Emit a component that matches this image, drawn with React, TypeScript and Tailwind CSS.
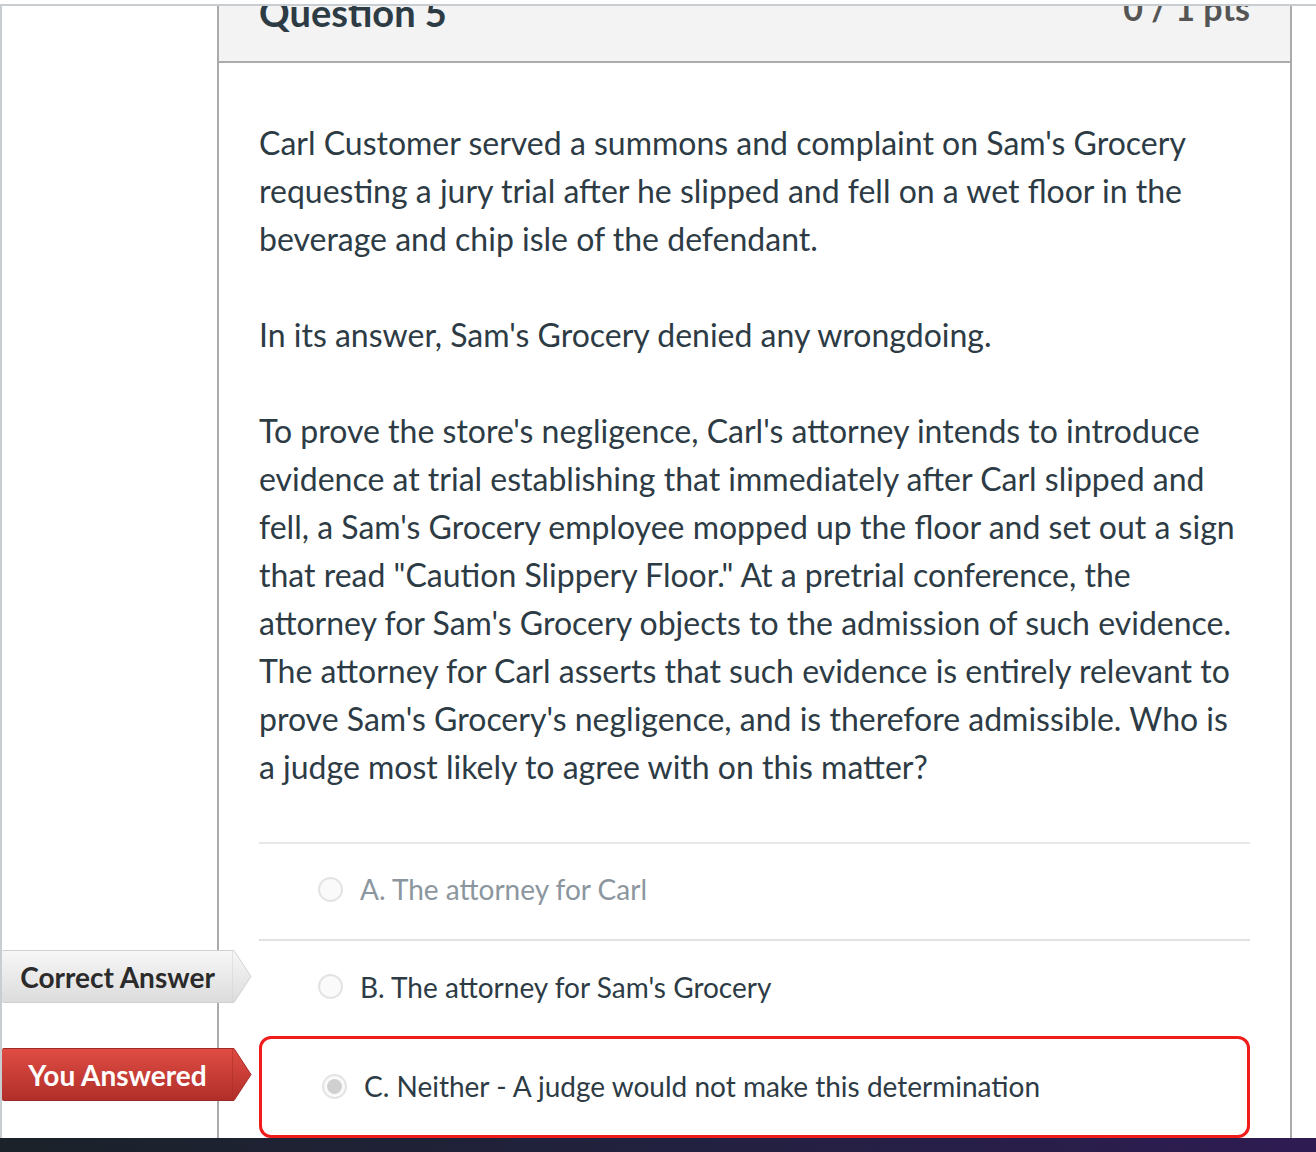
import React from 'react'

const paragraphs = [
  "Carl Customer served a summons and complaint on Sam's Grocery requesting a jury trial after he slipped and fell on a wet floor in the beverage and chip isle of the defendant.",
  "In its answer, Sam's Grocery denied any wrongdoing.",
  "To prove the store's negligence, Carl's attorney intends to introduce evidence at trial establishing that immediately after Carl slipped and fell, a Sam's Grocery employee mopped up the floor and set out a sign that read \"Caution Slippery Floor.\" At a pretrial conference, the attorney for Sam's Grocery objects to the admission of such evidence. The attorney for Carl asserts that such evidence is entirely relevant to prove Sam's Grocery's negligence, and is therefore admissible. Who is a judge most likely to agree with on this matter?",
]

function Radio({ checked = false }: { checked?: boolean }) {
  return (
    <span className="w-[25px] h-[25px] rounded-full border-2 border-[#e3e3e3] bg-[#fafafa] flex items-center justify-center flex-shrink-0">
      {checked && <span className="w-[15px] h-[15px] rounded-full bg-[#d0d0d0]" />}
    </span>
  )
}

function Tag({ label, variant, pos }: { label: string; variant: 'correct' | 'wrong'; pos: string }) {
  const body =
    variant === 'correct'
      ? 'bg-gradient-to-b from-[#f7f7f7] to-[#dcdcdc] text-[#2b2b2b] border-[#cfcfcf]'
      : 'bg-gradient-to-b from-[#df4c44] to-[#b12f29] text-white border-[#9e2a25]'
  const tip = variant === 'correct' ? '#d2d2d2' : '#a72c27'
  return (
    <div className={`absolute z-10 flex items-center h-[53px] ${pos}`}>
      <div className={`h-full w-[231px] flex items-center justify-center border-y rounded-l-[2px] text-[28px] font-bold ${body}`}>
        {label}
      </div>
      <svg width="20" height="53" viewBox="0 0 20 53" className="-ml-px">
        <defs>
          <linearGradient id={`g-${variant}`} x1="0" y1="0" x2="0" y2="1">
            <stop offset="0" stopColor={variant === 'correct' ? '#f7f7f7' : '#df4c44'} />
            <stop offset="1" stopColor={variant === 'correct' ? '#dcdcdc' : '#b12f29'} />
          </linearGradient>
        </defs>
        <path d="M0 0.5 L2 0.5 L19 26.5 L2 52.5 L0 52.5 Z" fill={`url(#g-${variant})`} stroke={tip} strokeWidth="1" />
      </svg>
    </div>
  )
}

export default function App() {
  return (
    <div
      className="w-[1316px] h-[1152px] overflow-hidden bg-white flex flex-col text-[#2d3b45]"
      style={{ fontFamily: 'Lato, "Open Sans", sans-serif' }}
    >
      <div className="h-[4px] flex-shrink-0" />
      <div className="flex-1 min-h-0 flex border-t-2 border-[#c7cdd1]">
        {/* left gutter */}
        <div className="w-[217px] flex-shrink-0 border-l-2 border-[#c7cdd1]" />

        {/* question */}
        <div className="w-[1075px] flex-shrink-0 border-x-2 border-[#ababab] flex flex-col">
          <div className="h-[57px] flex-shrink-0 bg-[#f3f3f3] border-b-2 border-[#ababab] overflow-hidden px-[40px] flex justify-between">
            <h2 className="text-[38px] font-bold leading-none mt-[-13px]">Question 5</h2>
            <span className="text-[34px] font-bold leading-none mt-[-15px] text-[#555]">0 / 1 pts</span>
          </div>

          <div className="px-[40px] pt-[56px]">
            {paragraphs.map((p, i) => (
              <p key={i} className="text-[32px] leading-[48px] mb-[48px] last:mb-0">
                {p}
              </p>
            ))}

            <div className="mt-[51px] border-t-2 border-[#e8e8e8]">
              <div className="h-[95px] pb-[5px] flex items-center gap-[17px] pl-[59px] text-[28px] text-[#8b969e]">
                <Radio />
                <span>A. The attorney for Carl</span>
              </div>
              <div className="relative h-[97px] pb-[4px] border-t-2 border-[#e2e2e2] flex items-center gap-[17px] pl-[59px] text-[28px]">
                <Tag label="Correct Answer" variant="correct" pos="left-[-257px] top-[9px]" />
                <Radio />
                <span>B. The attorney for Sam's Grocery</span>
              </div>
              <div className="relative h-[102px] pb-[2px] border-[3px] border-[#f01c1c] rounded-[12px] flex items-center gap-[17px] pl-[60px] text-[28px]">
                <Tag label="You Answered" variant="wrong" pos="left-[-260px] top-[9px]" />
                <Radio checked />
                <span>C. Neither - A judge would not make this determination</span>
              </div>
            </div>
          </div>
        </div>
      </div>
      <div className="h-[14px] flex-shrink-0 bg-gradient-to-r from-[#1b2229] via-[#22213f] to-[#2e1b52]" />
    </div>
  )
}
